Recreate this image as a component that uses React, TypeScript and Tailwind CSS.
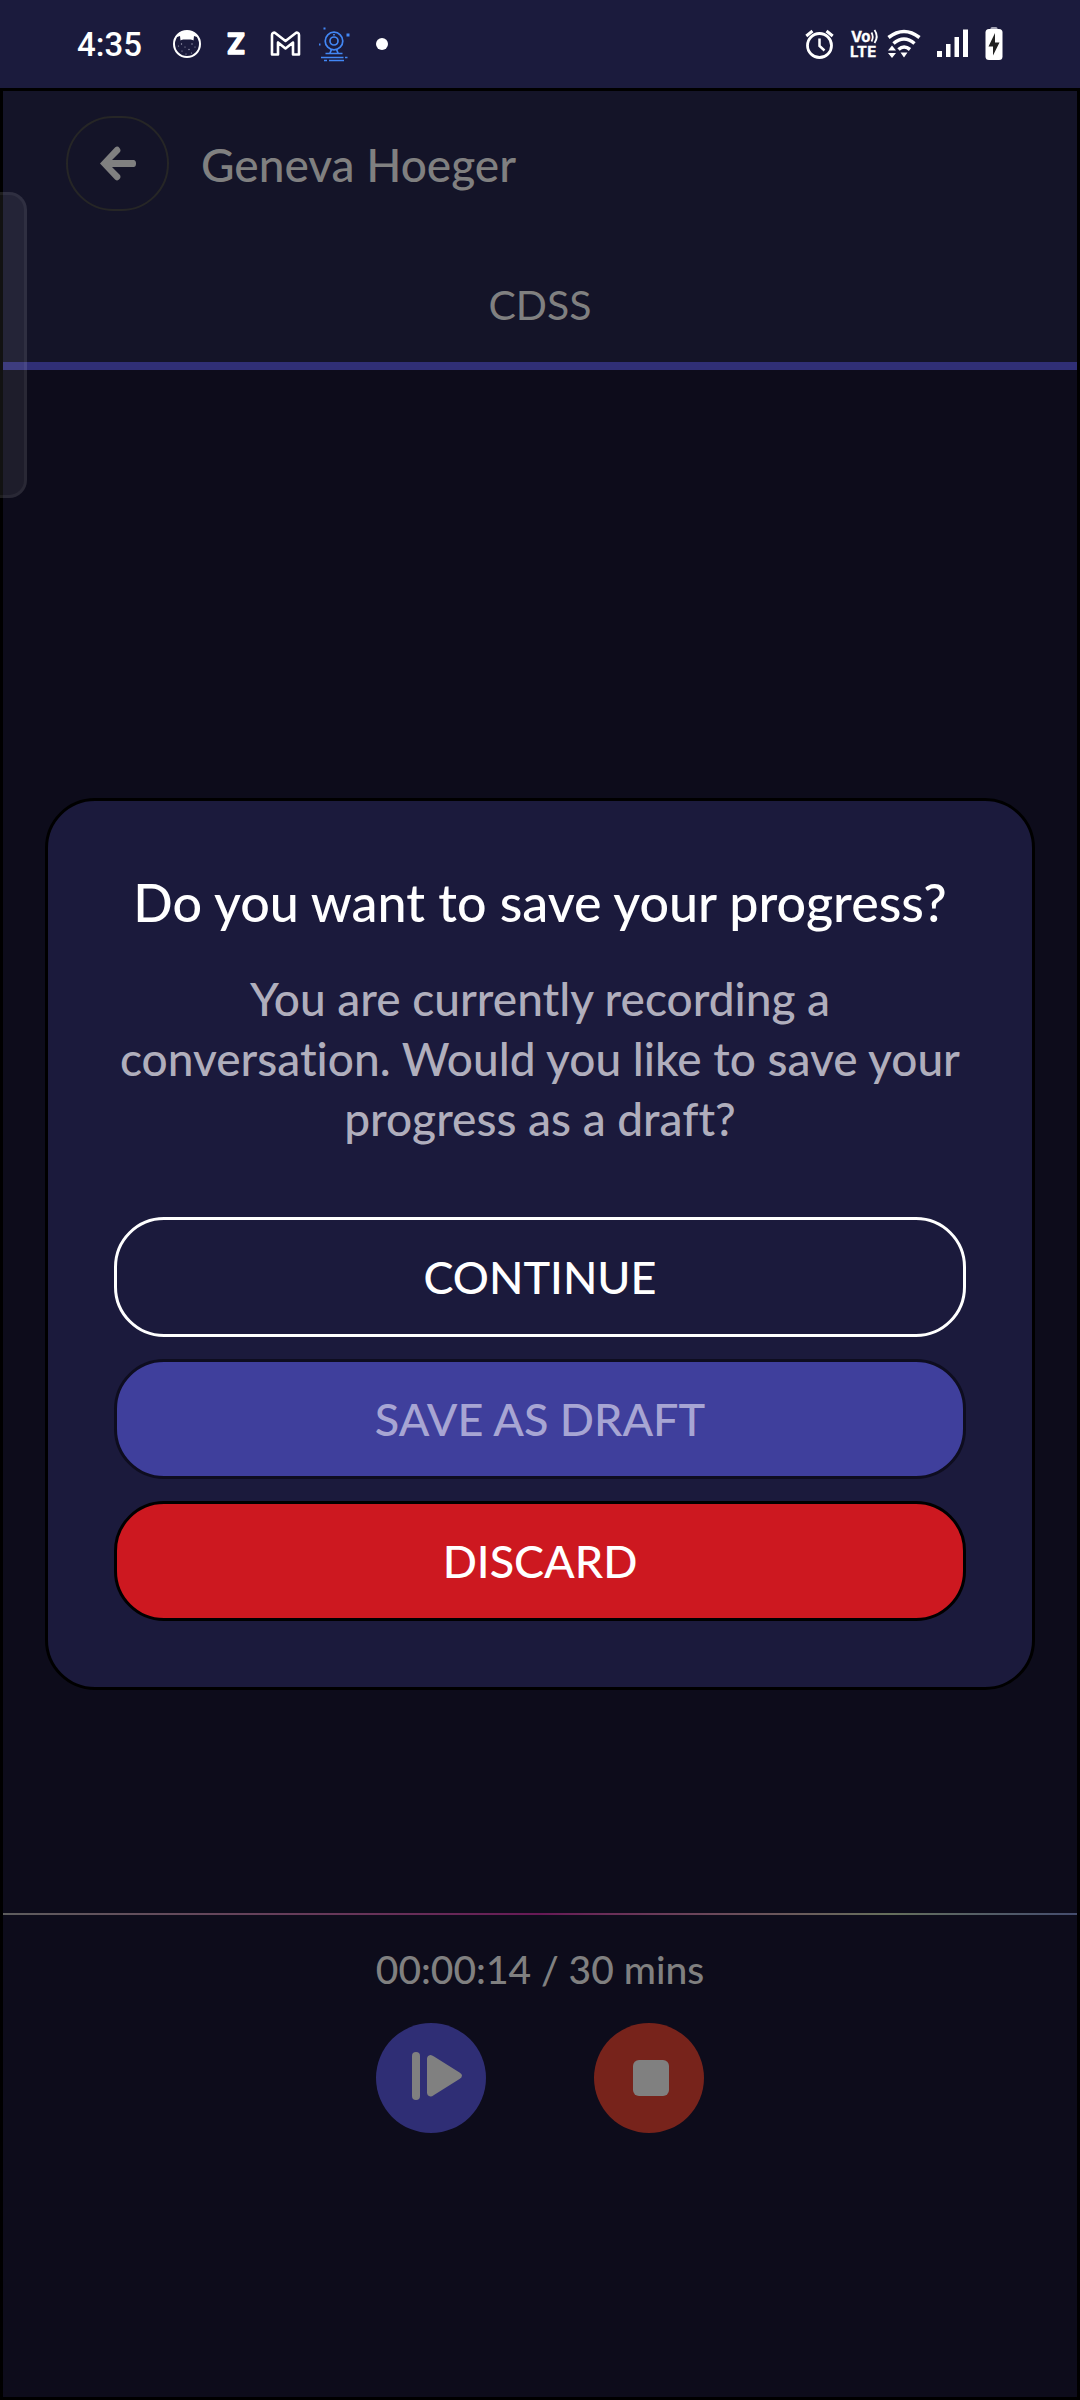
function CatIcon() {
  return (
    <svg aria-hidden="true" className="h-[30px] w-[30px]" viewBox="0 0 30 30">
      <circle cx="15" cy="15" r="13" fill="#1b1b3d" stroke="#fff" strokeWidth="2" />
      <path d="M5 8 C7 4 10 2 15 2 C20 2 23 4 25 8 L22 7 L21.500 11.500 C19.500 10 17.500 10.500 15 10.500 C12.500 10.500 10.500 10 8.500 11.500 L8 7 Z" fill="#fff" />
      <g fill="#a5a5b8">
        <circle cx="9.500" cy="15" r="0.700" />
        <circle cx="6.500" cy="17" r="0.600" />
        <circle cx="13" cy="18" r="0.600" />
        <circle cx="20" cy="15" r="0.700" />
        <circle cx="23" cy="18" r="0.600" />
        <circle cx="17" cy="20.500" r="0.700" />
        <circle cx="10" cy="22" r="0.600" />
        <circle cx="19.500" cy="24" r="0.600" />
        <circle cx="14" cy="25" r="0.600" />
      </g>
    </svg>
  );
}

function ZIcon() {
  return (
    <svg aria-hidden="true" className="h-[44px] w-[30px]" viewBox="0 0 30 44">
      <text
        x="15"
        y="32"
        textAnchor="middle"
        fontFamily="Inter, sans-serif"
        fontWeight="700"
        fontSize="28"
        fill="#fff"
        stroke="#fff"
        strokeWidth="1.500"
        strokeLinejoin="round"
      >
        Z
      </text>
    </svg>
  );
}

function MailIcon() {
  return (
    <svg aria-hidden="true" className="h-[30px] w-[32px]" viewBox="0 0 32 30" fill="none" stroke="#fff" strokeWidth="2.600" strokeLinejoin="round">
      <path d="M2 25.500 V6 C2 4 4 3 5.500 4.200 L15.500 12 L25.500 4.200 C27 3 29 4 29 6 V25.500 H23 V13.500 L15.500 19.500 L8 13.500 V25.500 Z" />
    </svg>
  );
}

function WebcamIcon() {
  return (
    <svg aria-hidden="true" className="h-[36px] w-[32px]" viewBox="0 0 32 36" fill="none" stroke="#4287f5" strokeWidth="1.700">
      <circle cx="16" cy="15" r="8.800" />
      <circle cx="16" cy="15" r="4" />
      <path d="M16 8 V9.500 M13.500 23.500 L12 27 M18.500 23.500 L20 27 M7.500 27.500 H24.500 M3 31.500 H25.500 M27 31.500 H29.500 M6 34.500 H9 M11 34.500 H26" />
      <path d="M5.500 2.500 H7.500 M1 18.500 H2.500" strokeWidth="2" />
      <rect x="28.500" y="7.500" width="3" height="3" fill="#4287f5" stroke="none" />
    </svg>
  );
}

function AlarmIcon() {
  return (
    <svg aria-hidden="true" className="h-[30px] w-[30px]" viewBox="0 0 30 30" fill="none" stroke="#fff">
      <circle cx="14.500" cy="16.500" r="12" strokeWidth="2.800" />
      <path d="M14.500 9.500 V17 L19.500 21.500" strokeWidth="2.500" />
      <path d="M1.300 7 L7.500 2 M27.700 7 L21.500 2" strokeWidth="3" />
    </svg>
  );
}

function VolteIcon() {
  return (
    <svg aria-hidden="true" className="h-[40px] w-[32px]" viewBox="-2 -5 32 40">
      <g fill="#fff" stroke="#fff" strokeWidth="0.300" fontFamily="Inter, sans-serif" fontWeight="700">
        <text x="0" y="13" fontSize="15">Vo</text>
        <text x="-1" y="28" fontSize="15">LTE</text>
      </g>
      <path d="M20.500 3.500 Q23 8 20.500 12.500 M23.500 1 Q28 7.500 23.500 14" fill="none" stroke="#fff" strokeWidth="1.800" />
    </svg>
  );
}

function WifiIcon() {
  return (
    <svg aria-hidden="true" className="h-[30px] w-[34px]" viewBox="0 0 34 30">
      <path d="M1.500 8.500 Q17 -3.500 32.500 8.500 M6.500 14.500 Q17 5.500 27.500 14.500 M11.500 20.500 Q17 15.500 23 20.500" fill="none" stroke="#fff" strokeWidth="3.600" />
      <path d="M13.500 23.500 H20.500 L17 28.500 Z M1 21.500 L5 16.500 L9 21.500 Z M1 24 H9 L5 29 Z" fill="#fff" />
    </svg>
  );
}

function SignalIcon() {
  return (
    <svg aria-hidden="true" className="h-[30px] w-[32px]" viewBox="0 0 32 30" fill="#fff">
      <path d="M0 22 H5 V28 H0 Z M9 15 H13.500 V28 H9 Z M17.500 8 H22 V28 H17.500 Z M26 0.500 H31 V28 H26 Z" />
    </svg>
  );
}

function BatteryIcon() {
  return (
    <svg aria-hidden="true" className="h-[34px] w-[18px]" viewBox="0 0 18 34">
      <rect x="5.500" y="0" width="7" height="4" rx="1.500" fill="#a5a5b5" />
      <rect x="0.500" y="2" width="17" height="31" rx="3.500" fill="#fff" />
      <path d="M10 6 L3.500 19.500 H8 V28.500 L14.500 15.500 H10 Z" fill="#222" />
    </svg>
  );
}

function StatusBar() {
  return (
    <div className="flex h-[88px] items-center justify-between bg-[#1b1b3d] pr-[77px] pl-[77px] text-white">
      <div className="flex items-center">
        <span className="pt-[2px] font-[Roboto,sans-serif] text-[33px] leading-[40px] font-medium">4:35</span>
        <div className="ml-[30px] flex items-center gap-[19px]">
          <CatIcon />
          <ZIcon />
          <MailIcon />
        </div>
        <div className="ml-4 flex items-center gap-[26px]">
          <WebcamIcon />
          <span className="h-3 w-3 rounded-full bg-white" />
        </div>
      </div>
      <div className="flex items-center gap-4">
        <div className="flex items-center gap-[14px]">
          <AlarmIcon />
          <div className="flex items-center gap-[6px]">
            <VolteIcon />
            <WifiIcon />
          </div>
        </div>
        <SignalIcon />
        <BatteryIcon />
      </div>
    </div>
  );
}

function Header() {
  return (
    <header className="bg-[#141428] pt-[25px] text-[#808080]">
      <div className="flex items-center gap-8 pl-[63px]">
        <button
          type="button"
          aria-label="Back"
          className="flex h-[95px] w-[103px] items-center justify-center rounded-[48px] border-2 border-[#262626]"
        >
          <svg aria-hidden="true" className="h-9 w-9" viewBox="0 0 36 36">
            <path d="M0 17.500 L15 1.500 Q17.500 -0.500 19.500 2 Q21.500 4.500 19.500 6.500 L12 14 H33.500 Q36 14 36 17.500 Q36 21 33.500 21 H12 L19.500 28.500 Q21.500 30.500 19.500 33 Q17.500 35.500 15 33.500 Z" fill="#808080" />
          </svg>
        </button>
        <h1 className="pt-[2px] text-[46px] leading-[60px] font-medium">Geneva Hoeger</h1>
      </div>
      <nav className="mt-[34px] flex">
        <button type="button" className="h-[125px] flex-1 border-b-8 border-[#302f76] pt-[2px] text-[41px] leading-[50px]">
          CDSS
        </button>
      </nav>
    </header>
  );
}

function Recorder() {
  return (
    <footer className="pb-[264px] text-[#808080]">
      <div className="flex h-[2px]">
        <div className="flex-1 bg-linear-to-r from-[#5e5e5e] to-[#681856]" />
        <div className="flex-1 bg-linear-to-r from-[#681856] via-[#66705c] via-65% to-[#454d6e]" />
      </div>
      <p className="mt-[29px] text-center text-[39px] leading-[50px] font-medium">00:00:14 / 30 mins</p>
      <div className="mt-[29px] flex justify-center gap-[108px]">
        <button type="button" aria-label="Resume recording" className="flex h-[110px] w-[110px] items-center justify-center rounded-full bg-[#2f2e75]">
          <svg aria-hidden="true" className="h-[110px] w-[110px]" viewBox="0 0 110 110" fill="#808080">
            <rect x="36" y="29" width="8" height="48" rx="4" />
            <path d="M51 36 Q51 32.500 54.500 32 Q56 32 58 33.500 L83.500 49.500 Q86 51 86 52.500 Q86 54.500 83.500 56 L58 72 Q56 73.500 54.500 73.500 Q51 73 51 69.500 Z" />
          </svg>
        </button>
        <button type="button" aria-label="Stop recording" className="flex h-[110px] w-[110px] items-center justify-center rounded-full bg-[#77231b]">
          <span className="ml-1 h-9 w-9 rounded-md bg-[#808080]" />
        </button>
      </div>
    </footer>
  );
}

function SaveDialog() {
  return (
    <div className="absolute inset-0 flex items-center px-[42px]">
      <section
        role="dialog"
        aria-modal="true"
        aria-labelledby="save-title"
        className="w-full rounded-[50px] border-[3px] border-black bg-[#1b1a3c] px-[66px] pt-[71px] pb-[66px] text-center font-medium"
      >
        <h2 id="save-title" className="text-[52px] leading-[60px] text-white">
          Do you want to save your progress?
        </h2>
        <p className="mt-[37px] text-[46px] leading-[60px] text-[#b0aebc]">
          You are currently recording a
          <br />
          conversation. Would you like to save your progress as a draft?
        </p>
        <div className="mt-[68px] flex flex-col gap-[22px] text-[45px] leading-[60px]">
          <button type="button" className="h-[120px] rounded-[50px] border-[3px] border-white text-white">
            CONTINUE
          </button>
          <button type="button" disabled className="h-[120px] rounded-[50px] border-[3px] border-[#0e0d1f] bg-[#3f3f9c] text-[#a7a5d3]">
            SAVE AS DRAFT
          </button>
          <button type="button" className="h-[120px] rounded-[50px] border-[3px] border-black bg-[#cd1820] text-white">
            DISCARD
          </button>
        </div>
      </section>
    </div>
  );
}

export default function App() {
  return (
    <div className="relative flex min-h-screen flex-col bg-[#0d0c1b] font-[Lato,sans-serif] [font-variant-ligatures:no-common-ligatures]">
      <StatusBar />
      <main className="relative flex flex-1 flex-col border-[3px] border-black">
        <Header />
        <div className="flex-1" />
        <Recorder />
        <SaveDialog />
      </main>
      <div className="absolute top-[192px] left-0 h-[306px] w-[27px] rounded-r-[18px] border-[3px] border-l-0 border-white/5 bg-white/7" />
    </div>
  );
}
